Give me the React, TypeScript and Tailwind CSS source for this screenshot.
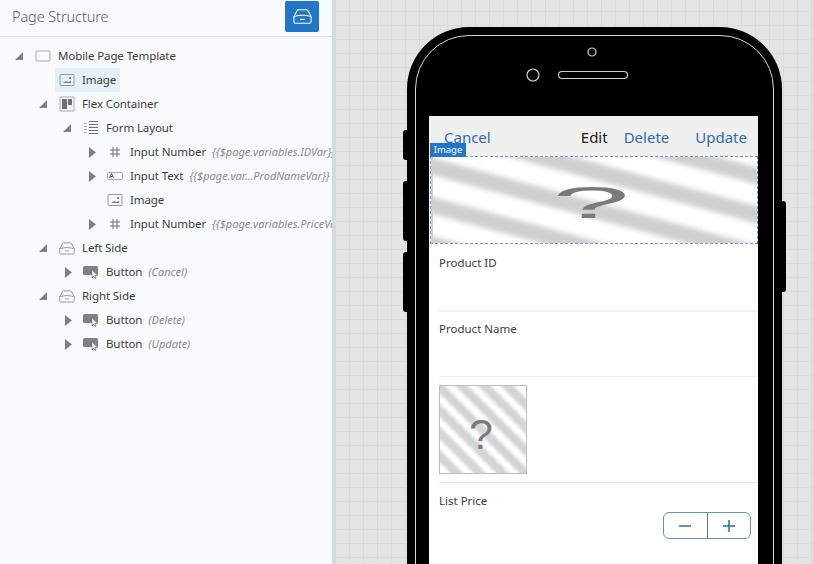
const FONT = "font-['Noto_Sans','Open_Sans',sans-serif]";

function InboxIcon({ className }: { className: string }) {
  return (
    <svg className={className} viewBox="0 0 20 16" fill="none" stroke="currentColor" strokeWidth="1.100">
      <path d="M1 8 4.500 1.500Q4.800 1 5.500 1h9q.7 0 1 .5L19 8v5.500q0 1.500-1.500 1.500h-15Q1 15 1 13.500Z" />
      <path d="M1 8q9-2.500 18 0" />
      <path d="M7.500 11h5" />
    </svg>
  );
}

function PageIcon() {
  return (
    <svg className="w-[16px] h-[14px]" viewBox="0 0 16 14" fill="none">
      <rect x="1" y="2" width="14" height="10" rx="1" stroke="#a9a9a9" />
    </svg>
  );
}

function ImageIcon() {
  return (
    <svg className="w-[16px] h-[14px]" viewBox="0 0 16 14" fill="none">
      <rect x="1" y="1.500" width="14" height="11" rx="1" stroke="#9a9a9a" />
      <path d="M4 10 7 8l2 1 3-1v2Z" fill="#808080" />
      <rect x="10" y="4" width="2" height="2" fill="#808080" />
    </svg>
  );
}

function FlexIcon() {
  return (
    <svg className="w-[16px] h-[16px]" viewBox="0 0 16 16" fill="none">
      <rect x="1" y="1" width="14" height="14" stroke="#a9a9a9" />
      <rect x="3" y="3" width="5" height="10" fill="#6f6f6f" />
      <rect x="9" y="3" width="4" height="6" fill="#6f6f6f" />
    </svg>
  );
}

function FormIcon() {
  return (
    <svg className="w-[16px] h-[16px]" viewBox="0 0 16 16" fill="none">
      <path d="M1 3.500h3M1 6.500h3M1 9.500h3M1 12.500h3" stroke="#a9a9a9" />
      <path d="M6 1.500h9M6 4.500h9M6 7.500h9M6 10.500h9M6 13.500h9" stroke="#6f6f6f" />
    </svg>
  );
}

function NumberIcon() {
  return (
    <svg className="w-[16px] h-[14px]" viewBox="0 0 16 14" fill="none" stroke="#6f6f6f">
      <path d="M6 2v10M10 2v10M3 5h10M3 9h10" />
    </svg>
  );
}

function TextIcon() {
  return (
    <svg className="w-[16px] h-[12px]" viewBox="0 0 16 12" fill="none">
      <rect x="0.500" y="2.500" width="15" height="7" rx="1" stroke="#a9a9a9" />
      <path d="M2.500 8 4.500 3.500 6.500 8M3.300 6.500h2.500" stroke="#555" />
    </svg>
  );
}

function ButtonIcon() {
  return (
    <svg className="w-[16px] h-[14px]" viewBox="0 0 16 14">
      <rect x="0" y="1" width="15" height="9" rx="1.500" fill="#808080" />
      <path d="M9 5v8l2-2 1 2.500 1-.5-1-2.500h2.500Z" fill="#f9fafc" stroke="#808080" strokeWidth="0.800" />
    </svg>
  );
}

function TrayIcon() {
  return <InboxIcon className="w-[16px] h-[15px] text-[#8c8c8c]" />;
}

type Row = {
  label: string;
  level: number;
  arrow?: "down" | "right";
  icon: React.ReactNode;
  note?: string;
  selected?: boolean;
};

const rows: Row[] = [
  { label: "Mobile Page Template", level: 0, arrow: "down", icon: <PageIcon /> },
  { label: "Image", level: 1, icon: <ImageIcon />, selected: true },
  { label: "Flex Container", level: 1, arrow: "down", icon: <FlexIcon /> },
  { label: "Form Layout", level: 2, arrow: "down", icon: <FormIcon /> },
  { label: "Input Number", level: 3, arrow: "right", icon: <NumberIcon />, note: "{{$page.variables.IDVar}}" },
  { label: "Input Text", level: 3, arrow: "right", icon: <TextIcon />, note: "{{$page.var...ProdNameVar}}" },
  { label: "Image", level: 3, icon: <ImageIcon /> },
  { label: "Input Number", level: 3, arrow: "right", icon: <NumberIcon />, note: "{{$page.variables.PriceVar}}" },
  { label: "Left Side", level: 1, arrow: "down", icon: <TrayIcon /> },
  { label: "Button", level: 2, arrow: "right", icon: <ButtonIcon />, note: "(Cancel)" },
  { label: "Right Side", level: 1, arrow: "down", icon: <TrayIcon /> },
  { label: "Button", level: 2, arrow: "right", icon: <ButtonIcon />, note: "(Delete)" },
  { label: "Button", level: 2, arrow: "right", icon: <ButtonIcon />, note: "(Update)" },
];

const indent = ["pl-[15px]", "pl-[39px]", "pl-[63px]", "pl-[87px]"];

function TreeRow({ row }: { row: Row }) {
  return (
    <div className={`flex items-center h-6 whitespace-nowrap ${indent[row.level]}`}>
      <span className="w-[20px] flex shrink-0">
        {row.arrow === "down" && (
          <svg className="w-[8px] h-[8px]" viewBox="0 0 8 8">
            <path d="M8 0v8H0Z" fill="#808080" />
          </svg>
        )}
        {row.arrow === "right" && (
          <svg className="w-[7px] h-[11px] ml-[2px]" viewBox="0 0 7 11">
            <path d="M0 0l7 5.500-7 5.500Z" fill="#808080" />
          </svg>
        )}
      </span>
      <span className={`flex items-center w-[23px] h-6 shrink-0 ${row.selected ? "bg-[#e3f0f9] -ml-[4px] pl-[4px] w-[27px]" : ""}`}>
        {row.icon}
      </span>
      <span className={`text-[11.500px] tracking-[-0.1px] text-[#3d3d3d] ${row.selected ? "bg-[#e3f0f9] h-6 leading-6 pr-[4px]" : ""}`}>{row.label}</span>
      {row.note && <span className="ml-[6px] text-[11px] italic text-[#8a8a8a]">{row.note}</span>}
    </div>
  );
}

// the stretched placeholder over the top of the page
function WidePlaceholder() {
  const bands = [-116, -77, -38, 1, 40, 79];
  return (
    <svg className="block w-full h-full" viewBox="0 0 326 86" preserveAspectRatio="none">
      <defs>
        <filter id="soft-wide" x="-5%" y="-10%" width="110%" height="120%">
          <feGaussianBlur stdDeviation="2.500" />
        </filter>
      </defs>
      <rect width="326" height="86" fill="#ffffff" />
      <g filter="url(#soft-wide)" fill="#cfcfcf">
        {bands.map((d) => (
          <polygon key={d} points={`-10,${d - 3} 336,${d + 90} 336,${d + 107} -10,${d + 14}`} />
        ))}
      </g>
      <rect width="2" height="86" fill="#cfcfcf" />
      <text
        transform="translate(160 61) scale(3.2 1)"
        textAnchor="middle"
        fontSize="44"
        fill="#7a7a7a"
        fontFamily="'Liberation Sans', sans-serif"
      >
        ?
      </text>
    </svg>
  );
}

function SquarePlaceholder() {
  const bands = [-78, -54.5, -31, -7.5, 16, 39.5, 63];
  return (
    <svg className="block w-full h-full" viewBox="0 0 88 88">
      <defs>
        <filter id="soft-square" x="-10%" y="-10%" width="120%" height="120%">
          <feGaussianBlur stdDeviation="1.800" />
        </filter>
      </defs>
      <rect width="88" height="88" fill="#ffffff" />
      <g filter="url(#soft-square)" fill="#d4d4d4">
        {bands.map((c) => (
          <polygon key={c} points={`${c - 10},-10 ${c + 3},-10 ${c + 113},100 ${c + 100},100`} />
        ))}
      </g>
      <text x="42" y="64" textAnchor="middle" fontSize="44" fill="#7a7a7a" fontFamily="'Liberation Sans', sans-serif">
        ?
      </text>
    </svg>
  );
}

export default function App() {
  return (
    <div className={`flex w-[813px] h-[564px] overflow-hidden ${FONT}`}>
      {/* Page structure panel */}
      <div className="w-[335px] h-full shrink-0 bg-[#f9fafc] border-r-[3px] border-[#d3dadc] overflow-hidden">
        <div className="flex items-center justify-between h-[37px] pl-[12px] pr-[13px] pb-[3px] border-b border-[#d8e1e9]">
          <span className="text-[14.500px] tracking-[-0.1px] font-light text-[#5c5c5c]">Page Structure</span>
          <button className="flex items-center justify-center w-[34px] h-[31px] bg-[#2176c7] rounded-[2px] text-white">
            <InboxIcon className="w-[19px] h-[17px]" />
          </button>
        </div>
        <div className="pt-[7px]">
          {rows.map((row, i) => (
            <TreeRow key={i} row={row} />
          ))}
        </div>
      </div>

      {/* Canvas */}
      <div className="flex-1 h-full pl-[72px] pt-[27px] overflow-hidden bg-[#e4e4e4] bg-[linear-gradient(#dadada_1px,transparent_1px),linear-gradient(90deg,#dadada_1px,transparent_1px)] bg-[size:14px_14px] bg-[position:0_11px]">
        <div className="relative w-[375px] h-[640px] bg-black rounded-t-[62px] px-[22px]">
          {/* side buttons */}
          <div className="absolute -left-[4px] top-[103px] w-[4px] h-[30px] bg-black rounded-l-[3px]" />
          <div className="absolute -left-[4px] top-[154px] w-[4px] h-[60px] bg-black rounded-l-[3px]" />
          <div className="absolute -left-[4px] top-[225px] w-[4px] h-[60px] bg-black rounded-l-[3px]" />
          <div className="absolute -right-[4px] top-[174px] w-[4px] h-[91px] bg-black rounded-r-[3px]" />
          {/* inner outline */}
          <div className="absolute left-[8px] right-[8px] top-[8px] h-[640px] border border-[#d8d8d8] rounded-t-[54px]" />

          <svg className="relative block w-[331px] h-[89px]" viewBox="0 0 331 89" fill="none" stroke="#d0d0d0" strokeWidth="1.200">
            <circle cx="163" cy="25" r="4" />
            <circle cx="104" cy="48" r="6" />
            <rect x="129.500" y="44.500" width="69" height="7" rx="3.500" />
          </svg>

          {/* Device screen */}
          <div className="relative w-[329px] h-[560px] bg-white">
            <div className="flex items-center justify-between h-[41px] pt-[1px] pl-[15px] pr-[11px] bg-[#f0f0f0] text-[15px] text-[#2d6cb0]">
              <span>Cancel</span>
              <div className="flex items-center">
                <span className="text-[#1a1a1a]">Edit</span>
                <span className="ml-[16px]">Delete</span>
                <span className="ml-[26px]">Update</span>
              </div>
            </div>

            <div className="relative ml-[1px] h-[88px] -mt-[1px] border border-dashed border-[#6e9fd0]">
              <WidePlaceholder />
              <span className="absolute -left-[1px] -top-[14px] w-[36px] h-[14px] bg-[#2176c7] text-white text-[9.500px] leading-[14px] text-center">
                Image
              </span>
            </div>

            <div className="pl-[10px] text-[11.500px] text-[#3d3d3d]">
              <div className="h-[68px] pt-[10px] border-b-2 border-[#f2f2f2]">Product ID</div>
              <div className="h-[65px] pt-[8px] border-b border-[#efefef]">Product Name</div>
              <div className="h-[106px] pt-[8px] border-b border-[#e8e8e8]">
                <div className="w-[88px] h-[89px] border border-[#bdbdbd]">
                  <SquarePlaceholder />
                </div>
              </div>
              <div className="relative h-[100px] pt-[9px]">
                <span>List Price</span>
                <div className="flex w-[88px] h-[27px] ml-[224px] mt-[3px] rounded-[6px] border border-[#5f93c4] text-[#2d6cb0]">
                  <span className="flex-1 flex items-center justify-center border-r border-[#3f7cb6]">
                    <svg className="w-[12px] h-[12px]" viewBox="0 0 12 12">
                      <path d="M0 6h12" stroke="currentColor" strokeWidth="1.500" />
                    </svg>
                  </span>
                  <span className="flex-1 flex items-center justify-center">
                    <svg className="w-[12px] h-[12px]" viewBox="0 0 12 12">
                      <path d="M0 6h12M6 0v12" stroke="currentColor" strokeWidth="1.500" />
                    </svg>
                  </span>
                </div>
              </div>
            </div>
          </div>
        </div>
      </div>
    </div>
  );
}
